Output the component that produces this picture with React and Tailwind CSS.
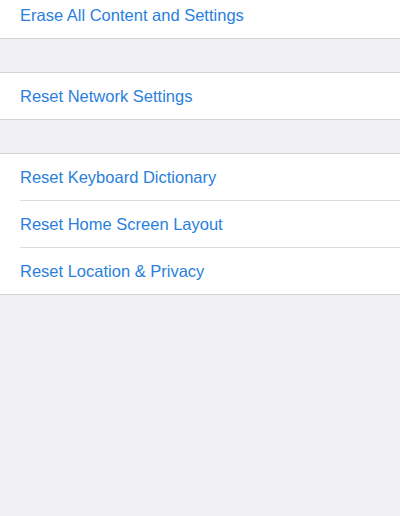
import React from 'react';

const sections = [
  ['Erase All Content and Settings'],
  ['Reset Network Settings'],
  ['Reset Keyboard Dictionary', 'Reset Home Screen Layout', 'Reset Location & Privacy'],
];

const Row = ({ label, last }) => (
  <button className="w-full pl-5 flex items-stretch text-left bg-white">
    <div
      className={`flex-1 h-[46px] box-content flex items-center text-[16.5px] text-[#2a7fdc] ${
        last ? '' : 'border-b border-[#dcdce0]'
      }`}
    >
      {label}
    </div>
  </button>
);

export default function App() {
  return (
    <div
      className="w-[400px] h-[516px] overflow-hidden bg-[#efeff4]"
      style={{ fontFamily: '"Liberation Sans", Arial, sans-serif' }}
    >
      {sections.map((rows, i) => (
        <div
          key={i}
          className={`${i === 0 ? '-mt-[9px]' : 'mt-[33px]'} border-y border-[#d3d3d8] bg-white`}
        >
          {rows.map((label, j) => (
            <Row key={label} label={label} last={j === rows.length - 1} />
          ))}
        </div>
      ))}
    </div>
  );
}
